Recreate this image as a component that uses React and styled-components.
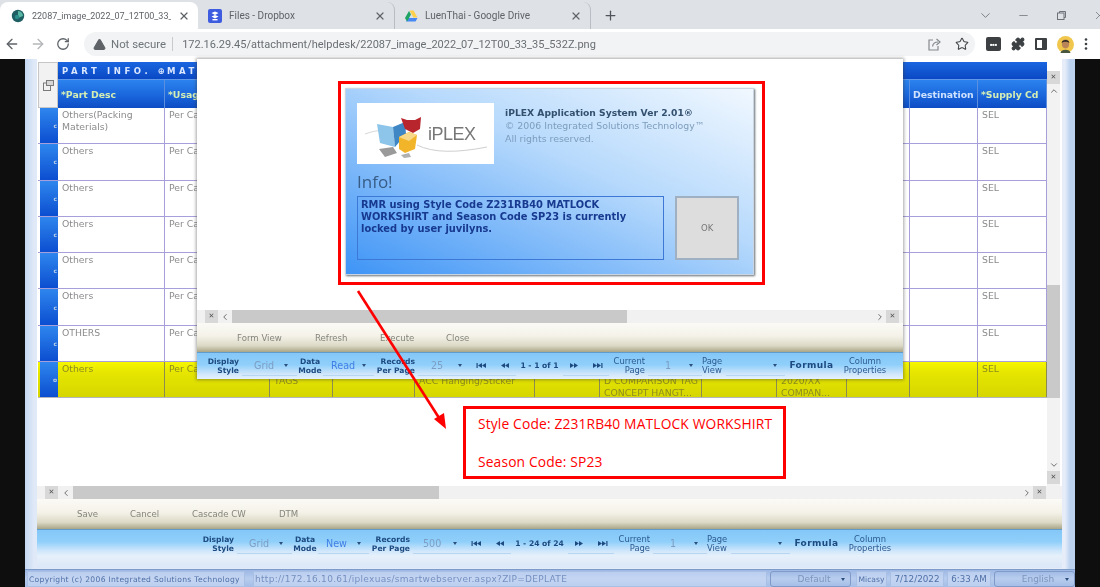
import React from 'react'
import styled, { createGlobalStyle } from 'styled-components'
import { ArrowLeft, ArrowRight, ChevronDown, ChevronLeft, ChevronRight, ChevronUp, Minus, Plus, Puzzle, RotateCw, Star, TriangleAlert, X } from 'lucide-react'

const GlobalStyle = createGlobalStyle`
  html, body { margin: 0; padding: 0; background: #0e0e0e; }
  * { box-sizing: border-box; }
`

const APP_FONT = `"DejaVu Sans", "Liberation Sans", sans-serif`
const CHROME_FONT = `Roboto, "Liberation Sans", sans-serif`
const GRID_COLS = '20px 107px 105px 63px 82px 120px 65px 102px 75px 70px 63px 68px 69px'

const Page = styled.div`
  position: relative;
  width: 1100px;
  height: 587px;
  overflow: hidden;
  background: #0e0e0e;
`
const Footage = styled.div`
  width: 100%;
  height: 100%;
  display: flex;
  flex-direction: column;
  filter: blur(0.7px);
`

/* browser chrome */
const TabStrip = styled.div`
  height: 29px;
  flex: none;
  display: flex;
  align-items: flex-end;
  background: #dee1e6;
  font-family: ${CHROME_FONT};
`
const Tab = styled.div`
  position: relative;
  width: ${p => p.$w}px;
  height: 27px;
  display: flex;
  align-items: center;
  gap: 7px;
  padding: 0 8px 0 ${p => p.$pad}px;
  background: ${p => (p.$active ? '#fff' : 'transparent')};
  border-radius: 8px 8px 0 0;
  border-right: ${p => (p.$active ? 'none' : '1px solid #b9bcc2')};
  font-size: 10px;
  color: #5f6368;
  white-space: nowrap;
`
const TabTitle = styled.span`
  flex: 1;
  overflow: hidden;
  font-size: ${p => p.$size || 10}px;
`
const NewTab = styled.div`
  width: 38px;
  height: 27px;
  display: flex;
  align-items: center;
  justify-content: center;
  color: #50545a;
`
const WindowButtons = styled.div`
  margin-left: auto;
  width: 134px;
  flex: none;
  height: 27px;
  display: flex;
  align-items: center;
  color: #6e7278;
  overflow: hidden;
`
const WinBtn = styled.div`
  width: ${p => p.$w}px;
  flex: none;
  display: flex;
  justify-content: center;
`
const WinClose = styled.div`
  padding-left: 13px;
  display: flex;
`
const AddressBar = styled.div`
  height: 30px;
  flex: none;
  display: flex;
  align-items: center;
  background: #fff;
  font-family: ${CHROME_FONT};
  color: #5f6368;
`
const NavIcons = styled.div`
  width: 84px;
  display: flex;
  align-items: center;
  padding-left: 4px;
  gap: 10px;
`
const Omnibox = styled.div`
  width: 891px;
  height: 24px;
  display: flex;
  align-items: center;
  padding: 0 6px 0 9px;
  border-radius: 12px;
  background: #f1f3f4;
  font-size: 11.4px;
`
const Insecure = styled.span`
  margin-left: 5px;
  padding-right: 6px;
  border-right: 1px solid #c8cacc;
  color: #70757a;
`
const Url = styled.span`
  margin-left: 9px;
  font-size: 11px;
  color: #6a6e73;
`
const OmniIcons = styled.div`
  margin-left: auto;
  display: flex;
  align-items: center;
  gap: 13px;
`
const ExtIcons = styled.div`
  flex: 1;
  display: flex;
  align-items: center;
  padding-left: 11px;
  gap: 10px;
`
const ExtBadge = styled.div`
  width: 15px;
  height: 14px;
  border-radius: 2px;
  background: #3c4043;
  display: flex;
  align-items: center;
  justify-content: center;
  color: #fff;
  font-size: 4px;
`
const SideIcon = styled.div`
  width: 12px;
  height: 12px;
  border: 2px solid #3c4043;
  border-right-width: 5px;
  border-radius: 1px;
`

/* recorded desktop */
const Stage = styled.div`
  flex: 1;
  min-height: 0;
  display: flex;
  justify-content: center;
  background: #0e0e0e;
`
const Screen = styled.div`
  position: relative;
  width: 1050px;
  height: 528px;
  display: flex;
  flex-direction: column;
  background: linear-gradient(90deg, #c5d8f2, #dfe9f8 9px, #e6edf9 1040px, #bcd2ef 1045px);
  font-family: ${APP_FONT};
`
const WindowBody = styled.div`
  flex: 1;
  min-height: 0;
  padding: 0 13px 1px 12px;
`
const WindowPanel = styled.div`
  height: 100%;
  display: flex;
  flex-direction: column;
  background: #fff;
`
const GridArea = styled.div`
  height: 427px;
  flex: none;
  display: flex;
  padding: 3px 0 0 1px;
`
const GridColumn = styled.div`
  width: 1009px;
`
const HeaderShell = styled.div`
  position: relative;
  display: grid;
  grid-template-columns: 20px 1fr;
  height: 46px;
`
const CornerCell = styled.div`
  display: flex;
  align-items: center;
  justify-content: center;
  background: #f2f2f2;
  border: 1px solid #c6c6c6;
  color: #7a7a7a;
`
const HeaderStack = styled.div`
  display: flex;
  flex-direction: column;
`
const BandRow = styled.div`
  height: 17px;
  display: flex;
  align-items: center;
  background: linear-gradient(#1a66e0, #0a48c4);
  color: #dbe8ff;
  font-size: 8.5px;
  font-weight: bold;
  letter-spacing: 3.6px;
  white-space: nowrap;
  overflow: hidden;
`
const BandCell = styled.div`
  width: ${p => p.$w}px;
  flex: none;
  padding-left: ${p => p.$pad}px;
`
const TitleRow = styled.div`
  flex: 1;
  display: grid;
  grid-template-columns: ${GRID_COLS.replace('20px ', '')};
  background: linear-gradient(#2c83ee, #1a66dc 55%, #0c4cc4);
  border-top: 1px solid #5f98e8;
`
const TitleCell = styled.div`
  display: flex;
  align-items: center;
  padding-left: 3px;
  border-right: 1px solid #5c90de;
  font-size: 9.3px;
  font-weight: bold;
  color: ${p => (p.$required ? '#d4eeb4' : '#cfe3ff')};
  white-space: nowrap;
  overflow: hidden;
`
const DataRow = styled.div`
  height: 36.3px;
  display: grid;
  grid-template-columns: ${GRID_COLS};
  background: ${p => (p.$selected ? 'linear-gradient(#f6f600, #e6e600 30%, #d6d600)' : '#fff')};
  border-bottom: 1px solid ${p => (p.$selected ? '#b4b4bc' : '#a79fdc')};
`
const RowHead = styled.div`
  margin-left: 2px;
  display: flex;
  align-items: center;
  justify-content: flex-end;
  padding-right: 1px;
  background: linear-gradient(#2f86ee, #0b4ed0);
  color: #b8cfe8;
  font-size: 6px;
  font-weight: bold;
`
const DataCell = styled.div`
  padding: 1px 0 0 4px;
  border-right: 1px solid ${p => (p.$selected ? '#8c8c50' : '#a79fdc')};
  font-size: 9.3px;
  line-height: 12px;
  color: ${p => (p.$selected ? '#8d8d1e' : '#8c8c8c')};
  overflow: hidden;
  white-space: nowrap;
`
const VScroll = styled.div`
  width: 13px;
  margin-top: 9px;
  display: flex;
  flex-direction: column;
  align-items: center;
  background: #f2f2f2;
`
const ScrollBox = styled.div`
  width: 13px;
  height: 13px;
  flex: none;
  display: flex;
  align-items: center;
  justify-content: center;
  background: #d8d8d8;
  color: #555;
  font-size: 7px;
  line-height: 1;
`
const ScrollArrow = styled.div`
  flex: none;
  height: 13px;
  width: ${p => p.$size || 13}px;
  display: flex;
  align-items: center;
  justify-content: center;
  color: #555;
`
const VGap = styled.div`
  height: ${p => p.$h}px;
  flex: ${p => (p.$h ? 'none' : 1)};
`
const VThumb = styled.div`
  width: 13px;
  height: 113px;
  flex: none;
  background: #c9c9c9;
`
const HScroll = styled.div`
  height: 13px;
  flex: none;
  display: flex;
  align-items: center;
  background: #f1f1f1;
  padding-left: ${p => p.$inset}px;
  padding-right: ${p => p.$end}px;
`
const HThumb = styled.div`
  width: ${p => p.$w}px;
  height: 13px;
  background: #c9c9c9;
`
const Spacer = styled.div`
  flex: 1;
`
const ActionBar = styled.div`
  height: ${p => p.$h}px;
  flex: none;
  display: flex;
  align-items: center;
  padding-left: ${p => p.$inset}px;
  background: linear-gradient(#fbfaf6, #f4f2e8 45%, #dcd9c6 78%, #a9a588);
  font-size: 8.6px;
  color: #85857c;
`
const ActionLabel = styled.div`
  width: ${p => p.$w}px;
  flex: none;
  white-space: nowrap;
`
const PagerBar = styled.div`
  height: ${p => p.$h}px;
  flex: none;
  display: flex;
  align-items: stretch;
  padding: ${p => p.$top}px 0 ${p => 6 - p.$top}px ${p => p.$inset}px;
  background: linear-gradient(#84c7f8, #8fcffa 45%, #cfe6fb 80%, #e6f1fc);
  border-top: 1px solid #5f9bcb;
  font-size: 7.6px;
  line-height: 9.5px;
  color: #1d4a80;
  font-weight: bold;
`
const PagerLabel = styled.div`
  width: ${p => p.$w}px;
  flex: none;
  display: flex;
  align-items: center;
  justify-content: ${p => (p.$center ? 'center' : 'flex-end')};
  padding-right: ${p => (p.$center ? 0 : 3)}px;
  text-align: ${p => (p.$center ? 'center' : 'right')};
  ${p => p.$left && 'justify-content: flex-start; text-align: left;'}
  ${p => p.$light && 'font-weight: normal; font-size: 8.4px; color: #2c5a90;'}
  ${p => p.$big && 'font-size: 9px; letter-spacing: 0.4px;'}
`
const PagerSelect = styled.div`
  width: ${p => p.$w}px;
  flex: none;
  display: flex;
  align-items: center;
  justify-content: space-between;
  padding: 0 ${p => p.$right}px 0 ${p => p.$left}px;
  border-bottom: 1px solid rgba(160, 200, 235, 0.6);
  font-size: 9.6px;
  font-weight: normal;
  color: ${p => (p.$accent ? '#3f7fe6' : '#7c9ec4')};
`
const Caret = styled.span`
  width: 0;
  height: 0;
  border-left: 2px solid transparent;
  border-right: 2px solid transparent;
  border-top: 3px solid #2b4f7d;
`
const PagerNav = styled.div`
  width: ${p => p.$w}px;
  flex: none;
  display: flex;
  align-items: center;
  justify-content: center;
  border-bottom: 1px solid rgba(160, 200, 235, 0.6);
  color: #1d4a80;
`
const FillBand = styled.div`
  flex: 1;
  background: linear-gradient(#e6f0fb, #dbe6f7);
`

/* popup window */
const Modal = styled.div`
  position: absolute;
  left: 172px;
  top: 0;
  width: 706px;
  height: 320px;
  display: flex;
  flex-direction: column;
  background: #fff;
  box-shadow: 0 0 3px 1px rgba(60, 60, 60, 0.45);
`
const ModalBody = styled.div`
  height: 251px;
  flex: none;
  display: flex;
  justify-content: center;
  padding: 29px 1px 0 0;
`
const Dialog = styled.div`
  width: 409px;
  height: 187px;
  display: flex;
  flex-direction: column;
  padding: 14px 14px 0 11px;
  background: linear-gradient(to bottom left, #f1f8ff 0%, #b6d9fc 42%, #3e94f6 100%);
  border: 1px solid #c9d5e2;
  box-shadow: 1px 1px 2px rgba(50, 60, 70, 0.75);
`
const AboutRow = styled.div`
  display: flex;
  gap: 11px;
`
const LogoCard = styled.div`
  width: 137px;
  height: 61px;
  flex: none;
  background: #fff;
`
const AboutText = styled.div`
  padding-top: 3px;
  font-size: 9.4px;
  line-height: 13px;
  color: #7d9dbd;
  white-space: nowrap;
`
const AboutTitle = styled.div`
  font-size: 9.2px;
  font-weight: bold;
  color: #33506f;
`
const InfoTitle = styled.div`
  margin-top: 5px;
  height: 27px;
  font-family: "Open Sans", sans-serif;
  font-size: 17px;
  line-height: 25px;
  color: #375c85;
`
const MessageRow = styled.div`
  display: flex;
  gap: 11px;
`
const MessageBox = styled.div`
  width: 308px;
  height: 64px;
  padding: 2px 3px;
  border: 1px solid #3d78d6;
  font-size: 9.9px;
  font-weight: bold;
  line-height: 12px;
  color: #17398f;
  white-space: nowrap;
`
const OkButton = styled.div`
  width: 64px;
  height: 64px;
  display: flex;
  align-items: center;
  justify-content: center;
  background: #dddddd;
  border: 2px solid #9fb0c2;
  font-size: 8.5px;
  color: #777;
`

/* annotations drawn on top of the recording */
const DialogHighlight = styled.div`
  position: absolute;
  left: 338px;
  top: 81px;
  width: 427px;
  height: 204px;
  border: 3px solid #ff0000;
`
const NoteBox = styled.div`
  position: absolute;
  left: 463px;
  top: 406px;
  width: 323px;
  height: 73px;
  display: flex;
  flex-direction: column;
  gap: 20px;
  padding: 6px 0 0 12px;
  background: #fff;
  border: 3px solid #ff0000;
  font-family: "Open Sans", sans-serif;
  font-size: 13.8px;
  letter-spacing: 0.15px;
  line-height: 18px;
  color: #ff0000;
  white-space: nowrap;
`
const ArrowOverlay = styled.svg`
  position: absolute;
  left: 350px;
  top: 285px;
`

/* status bar */
const StatusBar = styled.div`
  height: 18px;
  flex: none;
  display: flex;
  align-items: stretch;
  gap: 3px;
  padding: 1px 0 0 2px;
  background: linear-gradient(#9cb7e4, #b8cdee 50%, #a4bde6);
  border-top: 1px solid #7c9bc9;
  font-size: 7.6px;
  color: #4f70a6;
`
const StatusCell = styled.div`
  width: ${p => p.$w}px;
  flex: none;
  margin-left: ${p => p.$gap || 0}px;
  display: flex;
  align-items: center;
  justify-content: ${p => (p.$center ? 'center' : 'flex-start')};
  padding: 0 1px;
  border: 1px solid #a9c0e4;
  background: rgba(205, 221, 245, 0.55);
  white-space: nowrap;
  overflow: hidden;
  font-size: ${p => p.$size || 7.6}px;
  letter-spacing: ${p => p.$track || 0}px;
  color: ${p => p.$tone || '#4f70a6'};
`
const StatusSelect = styled.div`
  width: ${p => p.$w}px;
  flex: none;
  margin-left: ${p => p.$gap || 0}px;
  display: flex;
  align-items: center;
  justify-content: space-between;
  padding: 0 5px 0 16px;
  border: 1px solid #7f9ac6;
  border-radius: 3px;
  font-size: 9px;
  color: #7c95bd;
`
const StatusValue = styled.span`
  flex: 1;
  text-align: center;
`

function SkipGlyph({ dir, bar }) {
  const flip = dir === 'next' ? 'translate(11 0) scale(-1 1)' : undefined
  return (
    <svg width="11" height="7" viewBox="0 0 11 7">
      <g transform={flip} fill="currentColor">
        {bar && <rect x="0.5" y="1" width="1.2" height="5" />}
        <polygon points="2,3.5 6,1 6,6" />
        <polygon points="6,3.5 10,1 10,6" />
      </g>
    </svg>
  )
}

function Pager({ inset, top, mode, perPage, range, rangeWidth, startWidth }) {
  return (
    <PagerBar $inset={inset} $h={27} $top={top}>
      <PagerLabel $w={32}><span>Display<br />Style</span></PagerLabel>
      <PagerSelect $w={55} $left={12} $right={9}>Grid<Caret /></PagerSelect>
      <PagerLabel $w={26} $center><span>Data<br />Mode</span></PagerLabel>
      <PagerSelect $w={51} $left={8} $right={8} $accent>{mode}<Caret /></PagerSelect>
      <PagerLabel $w={44}><span>Records<br />Per Page</span></PagerLabel>
      <PagerSelect $w={51} $left={startWidth} $right={7}>{perPage}<Caret /></PagerSelect>
      <PagerNav $w={24}><SkipGlyph bar /></PagerNav>
      <PagerNav $w={23}><SkipGlyph /></PagerNav>
      <PagerLabel $w={rangeWidth} $center>{range}</PagerLabel>
      <PagerNav $w={23}><SkipGlyph dir="next" /></PagerNav>
      <PagerNav $w={23}><SkipGlyph dir="next" bar /></PagerNav>
      <PagerLabel $w={39} $light><span>Current<br />Page</span></PagerLabel>
      <PagerSelect $w={54} $left={17} $right={9}>1<Caret /></PagerSelect>
      <PagerLabel $w={24} $left $light><span>Page<br />View</span></PagerLabel>
      <PagerSelect $w={59} $left={0} $right={8}><span /><Caret /></PagerSelect>
      <PagerLabel $w={53} $center $big>Formula</PagerLabel>
      <PagerLabel $w={54} $center $light><span>Column<br />Properties</span></PagerLabel>
    </PagerBar>
  )
}

function IplexLogo() {
  return (
    <svg width="137" height="61" viewBox="0 0 137 61">
      <path d="M8 31 C22 26 28 27 38 30" stroke="#d8d8d8" strokeWidth="1" fill="none" />
      <path d="M60 42 C76 50 100 50 130 44" stroke="#cfcfcf" strokeWidth="1" fill="none" />
      <polygon points="20,21 36,24 38,44 23,40" fill="#8cc4ea" />
      <polygon points="36,24 48,19 49,31 38,44" fill="#3f86c4" />
      <polygon points="44,15 50,17 58,17 64,14 63,26 56,30 48,26" fill="#b8252c" />
      <polygon points="42,34 52,29 60,32 58,46 48,50 42,46" fill="#f2b52a" />
      <polygon points="42,34 52,38 60,32 52,29" fill="#f8d98a" />
      <polygon points="22,46 36,44 40,50 28,54" fill="#9a9a9a" />
      <polygon points="44,52 52,50 54,54 47,55" fill="#b0b0b0" />
      <text x="71" y="37" fontFamily="Liberation Sans, sans-serif" fontSize="18" fill="#777" letterSpacing="-0.5">iPLEX</text>
    </svg>
  )
}

function DriveIcon() {
  return (
    <svg width="13" height="12" viewBox="0 0 13 12">
      <polygon points="8.5,0.5 12.5,7.5 8.5,7.5 4.5,0.5" fill="#ffd04b" />
      <polygon points="3,8 12.5,8 10.5,11.5 1,11.5" fill="#4688f4" />
      <polygon points="0,8 4,1 6,4.5 2,11.5" fill="#1fa463" />
    </svg>
  )
}

function DropboxIcon() {
  return (
    <svg width="14" height="14" viewBox="0 0 14 14">
      <rect width="14" height="14" rx="2" fill="#3d5ce0" />
      <path d="M3.5 4 L7 6 L10.5 4 L7 2.4Z M3.5 7.5 L7 9.5 L10.5 7.5 L7 6 Z" fill="#fff" />
      <rect x="4.5" y="10" width="5" height="1.4" fill="#fff" />
    </svg>
  )
}

function SiteIcon() {
  return (
    <svg width="14" height="14" viewBox="0 0 14 14">
      <circle cx="7" cy="7" r="6.2" fill="#1f5e63" />
      <path d="M7 2 A5 5 0 0 1 12 7 L7 9Z" fill="#58b7a4" />
      <circle cx="6" cy="8" r="2.2" fill="#2b8e8a" />
    </svg>
  )
}

function ShareIcon() {
  return (
    <svg width="15" height="15" viewBox="0 0 15 15" fill="none" stroke="#85898e" strokeWidth="1.2">
      <path d="M6 3 H2 V13 H11 V9" />
      <path d="M5.5 9.5 C6 6.5 8 5 11 5 M9.5 2 L13 5 L9.5 8" />
    </svg>
  )
}

function Avatar() {
  return (
    <svg width="17" height="17" viewBox="0 0 17 17">
      <circle cx="8.5" cy="8.5" r="8.5" fill="#f0c64c" />
      <ellipse cx="8.5" cy="8" rx="3.6" ry="4.4" fill="#b98458" />
      <path d="M4.6 7 C4.6 3 12.4 3 12.4 7 C10.5 5.4 6.5 5.4 4.6 7Z" fill="#2a2420" />
      <path d="M3.5 17 C4 12.6 13 12.6 13.5 17Z" fill="#47563c" />
    </svg>
  )
}

function RestoreIcon() {
  return (
    <svg width="11" height="11" viewBox="0 0 11 11" fill="none" stroke="#6e7278" strokeWidth="1">
      <rect x="1.5" y="3" width="6.5" height="6.5" />
      <path d="M3.5 3 V1.5 H9.5 V7.5 H8" />
    </svg>
  )
}

function MenuDots() {
  return (
    <svg width="4" height="14" viewBox="0 0 4 14" fill="#3c4043">
      <circle cx="2" cy="2.5" r="1.3" />
      <circle cx="2" cy="7" r="1.3" />
      <circle cx="2" cy="11.5" r="1.3" />
    </svg>
  )
}

const ROWS = [
  { part: <>Others(Packing<br />Materials)</> },
  { part: 'Others' },
  { part: 'Others' },
  { part: 'Others' },
  { part: 'Others' },
  { part: 'Others' },
  { part: 'OTHERS' },
]
const HEADINGS = [
  ['*Part Desc', true], ['*Usage', true], ['', false], ['', false], ['', false], ['', false],
  ['', false], ['', false], ['', false], ['', false], ['Destination', false], ['*Supply Cd', true],
]

function App() {
  return (
    <Page>
      <GlobalStyle />
      <Footage>
        <TabStrip>
          <Tab $active $w={198} $pad={11}>
            <SiteIcon />
            <TabTitle $size={9}>22087_image_2022_07_12T00_33_</TabTitle>
            <X size={12} strokeWidth={2.4} />
          </Tab>
          <Tab $w={197} $pad={10}>
            <DropboxIcon />
            <TabTitle>Files - Dropbox</TabTitle>
            <X size={12} strokeWidth={2.4} />
          </Tab>
          <Tab $w={196} $pad={10}>
            <DriveIcon />
            <TabTitle>LuenThai - Google Drive</TabTitle>
            <X size={12} strokeWidth={2.4} />
          </Tab>
          <NewTab><Plus size={15} strokeWidth={2} /></NewTab>
          <WindowButtons>
            <WinBtn $w={38}><ChevronDown size={15} strokeWidth={1.4} /></WinBtn>
            <WinBtn $w={39}><Minus size={13} strokeWidth={1.4} /></WinBtn>
            <WinBtn $w={37}><RestoreIcon /></WinBtn>
            <WinClose><X size={13} strokeWidth={1.4} /></WinClose>
          </WindowButtons>
        </TabStrip>
        <AddressBar>
          <NavIcons>
            <ArrowLeft size={16} strokeWidth={2} />
            <ArrowRight size={16} strokeWidth={2} color="#b4b6b9" />
            <RotateCw size={14} strokeWidth={2.2} />
          </NavIcons>
          <Omnibox>
            <TriangleAlert size={13} strokeWidth={2} fill="#5f6368" color="#5f6368" />
            <Insecure>Not secure</Insecure>
            <Url>172.16.29.45/attachment/helpdesk/22087_image_2022_07_12T00_33_35_532Z.png</Url>
            <OmniIcons>
              <ShareIcon />
              <Star size={14} strokeWidth={1.8} color="#44474a" />
            </OmniIcons>
          </Omnibox>
          <ExtIcons>
            <ExtBadge>■■■</ExtBadge>
            <Puzzle size={14} fill="#3c4043" color="#3c4043" />
            <SideIcon />
            <Avatar />
            <MenuDots />
          </ExtIcons>
        </AddressBar>
        <Stage>
          <Screen>
            <WindowBody>
              <WindowPanel>
                <GridArea>
                  <GridColumn>
                    <HeaderShell>
                      <CornerCell>
                        <svg width="11" height="11" viewBox="0 0 11 11" fill="none" stroke="currentColor">
                          <rect x="0.5" y="3" width="7" height="7.5" />
                          <rect x="3.5" y="0.5" width="7" height="5" fill="#d6d6d6" />
                        </svg>
                      </CornerCell>
                      <HeaderStack>
                        <BandRow>
                          <BandCell $w={107} $pad={4}>PART INFO. ⊕</BandCell>
                          <BandCell $w={300} $pad={2}>MATERIAL INFO.</BandCell>
                        </BandRow>
                        <TitleRow>
                          {HEADINGS.map(([label, required], i) => (
                            <TitleCell key={i} $required={required}>{label}</TitleCell>
                          ))}
                        </TitleRow>
                      </HeaderStack>
                    </HeaderShell>
                    {ROWS.map((row, i) => (
                      <DataRow key={i}>
                        <RowHead>c</RowHead>
                        <DataCell>{row.part}</DataCell>
                        <DataCell>Per Case</DataCell>
                        {Array.from({ length: 9 }).map((_, c) => <DataCell key={c} />)}
                        <DataCell>SEL</DataCell>
                      </DataRow>
                    ))}
                    <DataRow $selected>
                      <RowHead>o</RowHead>
                      <DataCell $selected>Others</DataCell>
                      <DataCell $selected>Per Case</DataCell>
                      <DataCell $selected><br />TAGS</DataCell>
                      <DataCell $selected />
                      <DataCell $selected><br />ACC Hanging/Sticker</DataCell>
                      <DataCell $selected />
                      <DataCell $selected><br />D COMPARISON TAG<br />CONCEPT HANGT...</DataCell>
                      <DataCell $selected />
                      <DataCell $selected><br />2020/XX<br />COMPAN...</DataCell>
                      <DataCell $selected />
                      <DataCell $selected />
                      <DataCell $selected>SEL</DataCell>
                    </DataRow>
                  </GridColumn>
                  <VScroll>
                    <ScrollBox>✕</ScrollBox>
                    <ScrollArrow><ChevronUp size={10} strokeWidth={2} /></ScrollArrow>
                    <VGap $h={188} />
                    <VThumb />
                    <VGap />
                    <ScrollArrow><ChevronDown size={10} strokeWidth={2} /></ScrollArrow>
                    <ScrollBox>✕</ScrollBox>
                    <VGap $h={2} />
                  </VScroll>
                </GridArea>
                <HScroll $inset={8} $end={16}>
                  <ScrollBox>✕</ScrollBox>
                  <ScrollArrow $size={15}><ChevronLeft size={10} strokeWidth={2} /></ScrollArrow>
                  <HThumb $w={366} />
                  <Spacer />
                  <ScrollArrow><ChevronRight size={10} strokeWidth={2} /></ScrollArrow>
                  <ScrollBox>✕</ScrollBox>
                </HScroll>
                <ActionBar $h={30} $inset={40}>
                  <ActionLabel $w={53}>Save</ActionLabel>
                  <ActionLabel $w={62}>Cancel</ActionLabel>
                  <ActionLabel $w={87}>Cascade CW</ActionLabel>
                  <ActionLabel $w={40}>DTM</ActionLabel>
                </ActionBar>
                <Pager inset={168} top={4} mode="New" perPage="500" range="1 - 24 of 24" rangeWidth={57} startWidth={10} />
                <FillBand />
              </WindowPanel>
            </WindowBody>
            <StatusBar>
              <StatusCell $w={218} $track={0.3}>Copyright (c) 2006 Integrated Solutions Technology</StatusCell>
              <StatusCell $w={514} $gap={5} $size={9} $track={0.3} $tone="#7590c0">http://172.16.10.61/iplexuas/smartwebserver.aspx?ZIP=DEPLATE</StatusCell>
              <StatusSelect $w={81}><StatusValue>Default</StatusValue><Caret /></StatusSelect>
              <StatusCell $w={31} $gap={2} $center>Micasy</StatusCell>
              <StatusCell $w={54} $center $size={8.8}>7/12/2022</StatusCell>
              <StatusCell $w={44} $center $size={8.6}>6:33 AM</StatusCell>
              <StatusSelect $w={81}><StatusValue>English</StatusValue><Caret /></StatusSelect>
            </StatusBar>
            <Modal>
              <ModalBody>
                <Dialog>
                  <AboutRow>
                    <LogoCard><IplexLogo /></LogoCard>
                    <AboutText>
                      <AboutTitle>iPLEX Application System Ver 2.01®</AboutTitle>
                      <div>© 2006 Integrated Solutions Technology™</div>
                      <div>All rights reserved.</div>
                    </AboutText>
                  </AboutRow>
                  <InfoTitle>Info!</InfoTitle>
                  <MessageRow>
                    <MessageBox>
                      RMR using Style Code Z231RB40 MATLOCK<br />
                      WORKSHIRT and Season Code SP23 is currently<br />
                      locked by user juvilyns.
                    </MessageBox>
                    <OkButton>OK</OkButton>
                  </MessageRow>
                </Dialog>
              </ModalBody>
              <HScroll $inset={8} $end={4}>
                <ScrollBox>✕</ScrollBox>
                <ScrollArrow $size={14}><ChevronLeft size={10} strokeWidth={2} /></ScrollArrow>
                <HThumb $w={395} />
                <Spacer />
                <ScrollArrow><ChevronRight size={10} strokeWidth={2} /></ScrollArrow>
                <ScrollBox>✕</ScrollBox>
              </HScroll>
              <ActionBar $h={29} $inset={40}>
                <ActionLabel $w={78}>Form View</ActionLabel>
                <ActionLabel $w={65}>Refresh</ActionLabel>
                <ActionLabel $w={66}>Execute</ActionLabel>
                <ActionLabel $w={40}>Close</ActionLabel>
              </ActionBar>
              <Pager inset={13} top={3} mode="Read" perPage="25" range="1 - 1 of 1" rangeWidth={47} startWidth={13} />
            </Modal>
          </Screen>
        </Stage>
      </Footage>
      <DialogHighlight />
      <ArrowOverlay width="100" height="150" viewBox="0 0 100 150">
        <line x1="8" y1="6" x2="91" y2="136" stroke="#ff0000" strokeWidth="2.6" />
        <polygon points="96,144 84,134 94,128" fill="#ff0000" />
      </ArrowOverlay>
      <NoteBox>
        <div>Style Code: Z231RB40 MATLOCK WORKSHIRT</div>
        <div>Season Code: SP23</div>
      </NoteBox>
    </Page>
  )
}

export default App
